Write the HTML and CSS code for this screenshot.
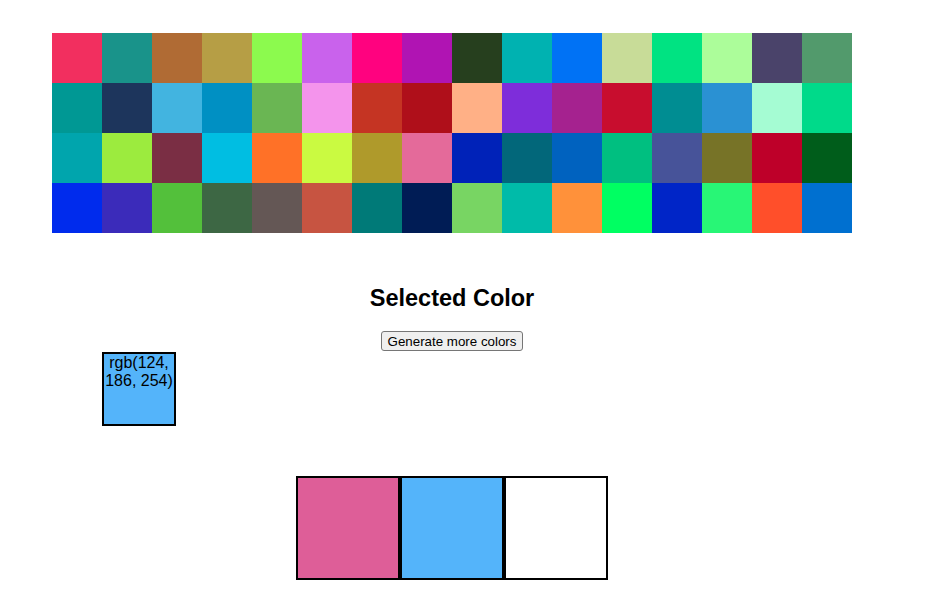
FILE: index.html
```html
<!DOCTYPE html>
<html>
<head>
<meta charset="utf-8">
<link rel="stylesheet" href="styles.css">
</head>
<body>
<div class="app">
  <div class="palette">
    <div class="cell" style="background:#F22F5F"></div>
    <div class="cell" style="background:#19938A"></div>
    <div class="cell" style="background:#B06B34"></div>
    <div class="cell" style="background:#B69E45"></div>
    <div class="cell" style="background:#8CFA4E"></div>
    <div class="cell" style="background:#C962EC"></div>
    <div class="cell" style="background:#FF027F"></div>
    <div class="cell" style="background:#B014B3"></div>
    <div class="cell" style="background:#263F1E"></div>
    <div class="cell" style="background:#00B2B1"></div>
    <div class="cell" style="background:#0072F5"></div>
    <div class="cell" style="background:#C8DC98"></div>
    <div class="cell" style="background:#00E382"></div>
    <div class="cell" style="background:#ACFD9A"></div>
    <div class="cell" style="background:#4A436A"></div>
    <div class="cell" style="background:#529A6C"></div>

    <div class="cell" style="background:#009894"></div>
    <div class="cell" style="background:#1D355C"></div>
    <div class="cell" style="background:#42B4E0"></div>
    <div class="cell" style="background:#0090C3"></div>
    <div class="cell" style="background:#6AB653"></div>
    <div class="cell" style="background:#F494EC"></div>
    <div class="cell" style="background:#C53423"></div>
    <div class="cell" style="background:#AF0F1A"></div>
    <div class="cell" style="background:#FFB086"></div>
    <div class="cell" style="background:#7E2DDA"></div>
    <div class="cell" style="background:#A5228F"></div>
    <div class="cell" style="background:#C80D2E"></div>
    <div class="cell" style="background:#008D92"></div>
    <div class="cell" style="background:#2A91D3"></div>
    <div class="cell" style="background:#A5FCD3"></div>
    <div class="cell" style="background:#00DA8A"></div>

    <div class="cell" style="background:#00A5AD"></div>
    <div class="cell" style="background:#9CEB3E"></div>
    <div class="cell" style="background:#7A2E44"></div>
    <div class="cell" style="background:#00BEE2"></div>
    <div class="cell" style="background:#FF7127"></div>
    <div class="cell" style="background:#CAFA41"></div>
    <div class="cell" style="background:#AF9A2B"></div>
    <div class="cell" style="background:#E46A9A"></div>
    <div class="cell" style="background:#0022B8"></div>
    <div class="cell" style="background:#02677A"></div>
    <div class="cell" style="background:#0062BF"></div>
    <div class="cell" style="background:#00BF80"></div>
    <div class="cell" style="background:#475399"></div>
    <div class="cell" style="background:#777327"></div>
    <div class="cell" style="background:#BE0029"></div>
    <div class="cell" style="background:#005D1B"></div>

    <div class="cell" style="background:#002BED"></div>
    <div class="cell" style="background:#3B2BBA"></div>
    <div class="cell" style="background:#53C03B"></div>
    <div class="cell" style="background:#3D6744"></div>
    <div class="cell" style="background:#645755"></div>
    <div class="cell" style="background:#C75441"></div>
    <div class="cell" style="background:#007A78"></div>
    <div class="cell" style="background:#001C55"></div>
    <div class="cell" style="background:#78D563"></div>
    <div class="cell" style="background:#00BBA9"></div>
    <div class="cell" style="background:#FF913A"></div>
    <div class="cell" style="background:#00FF62"></div>
    <div class="cell" style="background:#0025C7"></div>
    <div class="cell" style="background:#28F676"></div>
    <div class="cell" style="background:#FF4F2A"></div>
    <div class="cell" style="background:#0070D0"></div>
  </div>

  <h2 class="title">Selected Color</h2>
  <button class="more-btn" type="button">Generate more colors</button>
  <div class="selected">rgb(124, 186, 254)</div>

  <div class="swatches">
    <div class="swatch swatch-pink"></div>
    <div class="swatch swatch-blue"></div>
    <div class="swatch swatch-white"></div>
  </div>
</div>
</body>
</html>
```

FILE: styles.css
```css
html, body {
  background: #ffffff;
}
body {
  margin: 8px;
  font-family: "Liberation Sans", Arial, sans-serif;
  color: #000;
}
.app {
  width: 888px;
}
.palette {
  display: grid;
  grid-template-columns: repeat(16, 50px);
  grid-auto-rows: 50px;
  width: 800px;
  margin: 25px 0 0 44px;
}
.cell {
  width: 50px;
  height: 50px;
}
.title {
  margin: 51px 0 19px;
  text-align: center;
  font-size: 23.5px;
  font-weight: 700;
  line-height: 28px;
}
.more-btn {
  display: block;
  margin: 0 auto;
  height: 20px;
  padding: 1px 6px;
  font-family: "Liberation Sans", Arial, sans-serif;
  font-size: 13.33px;
  color: #000;
  background: #efefef;
  border: 1px solid #767676;
  border-radius: 3px;
}
.selected {
  width: 70px;
  height: 70px;
  margin: 1px 0 0 94px;
  border: 2px solid #000;
  background: #54B4FA;
  font-size: 16px;
  line-height: 18px;
  text-align: center;
}
.swatches {
  display: flex;
  justify-content: center;
  margin-top: 50px;
}
.swatch {
  width: 100px;
  height: 100px;
  border: 2px solid #000;
}
.swatch-pink { background: #DE5E98; }
.swatch-blue { background: #54B4FA; }
.swatch-white { background: #ffffff; }
```
